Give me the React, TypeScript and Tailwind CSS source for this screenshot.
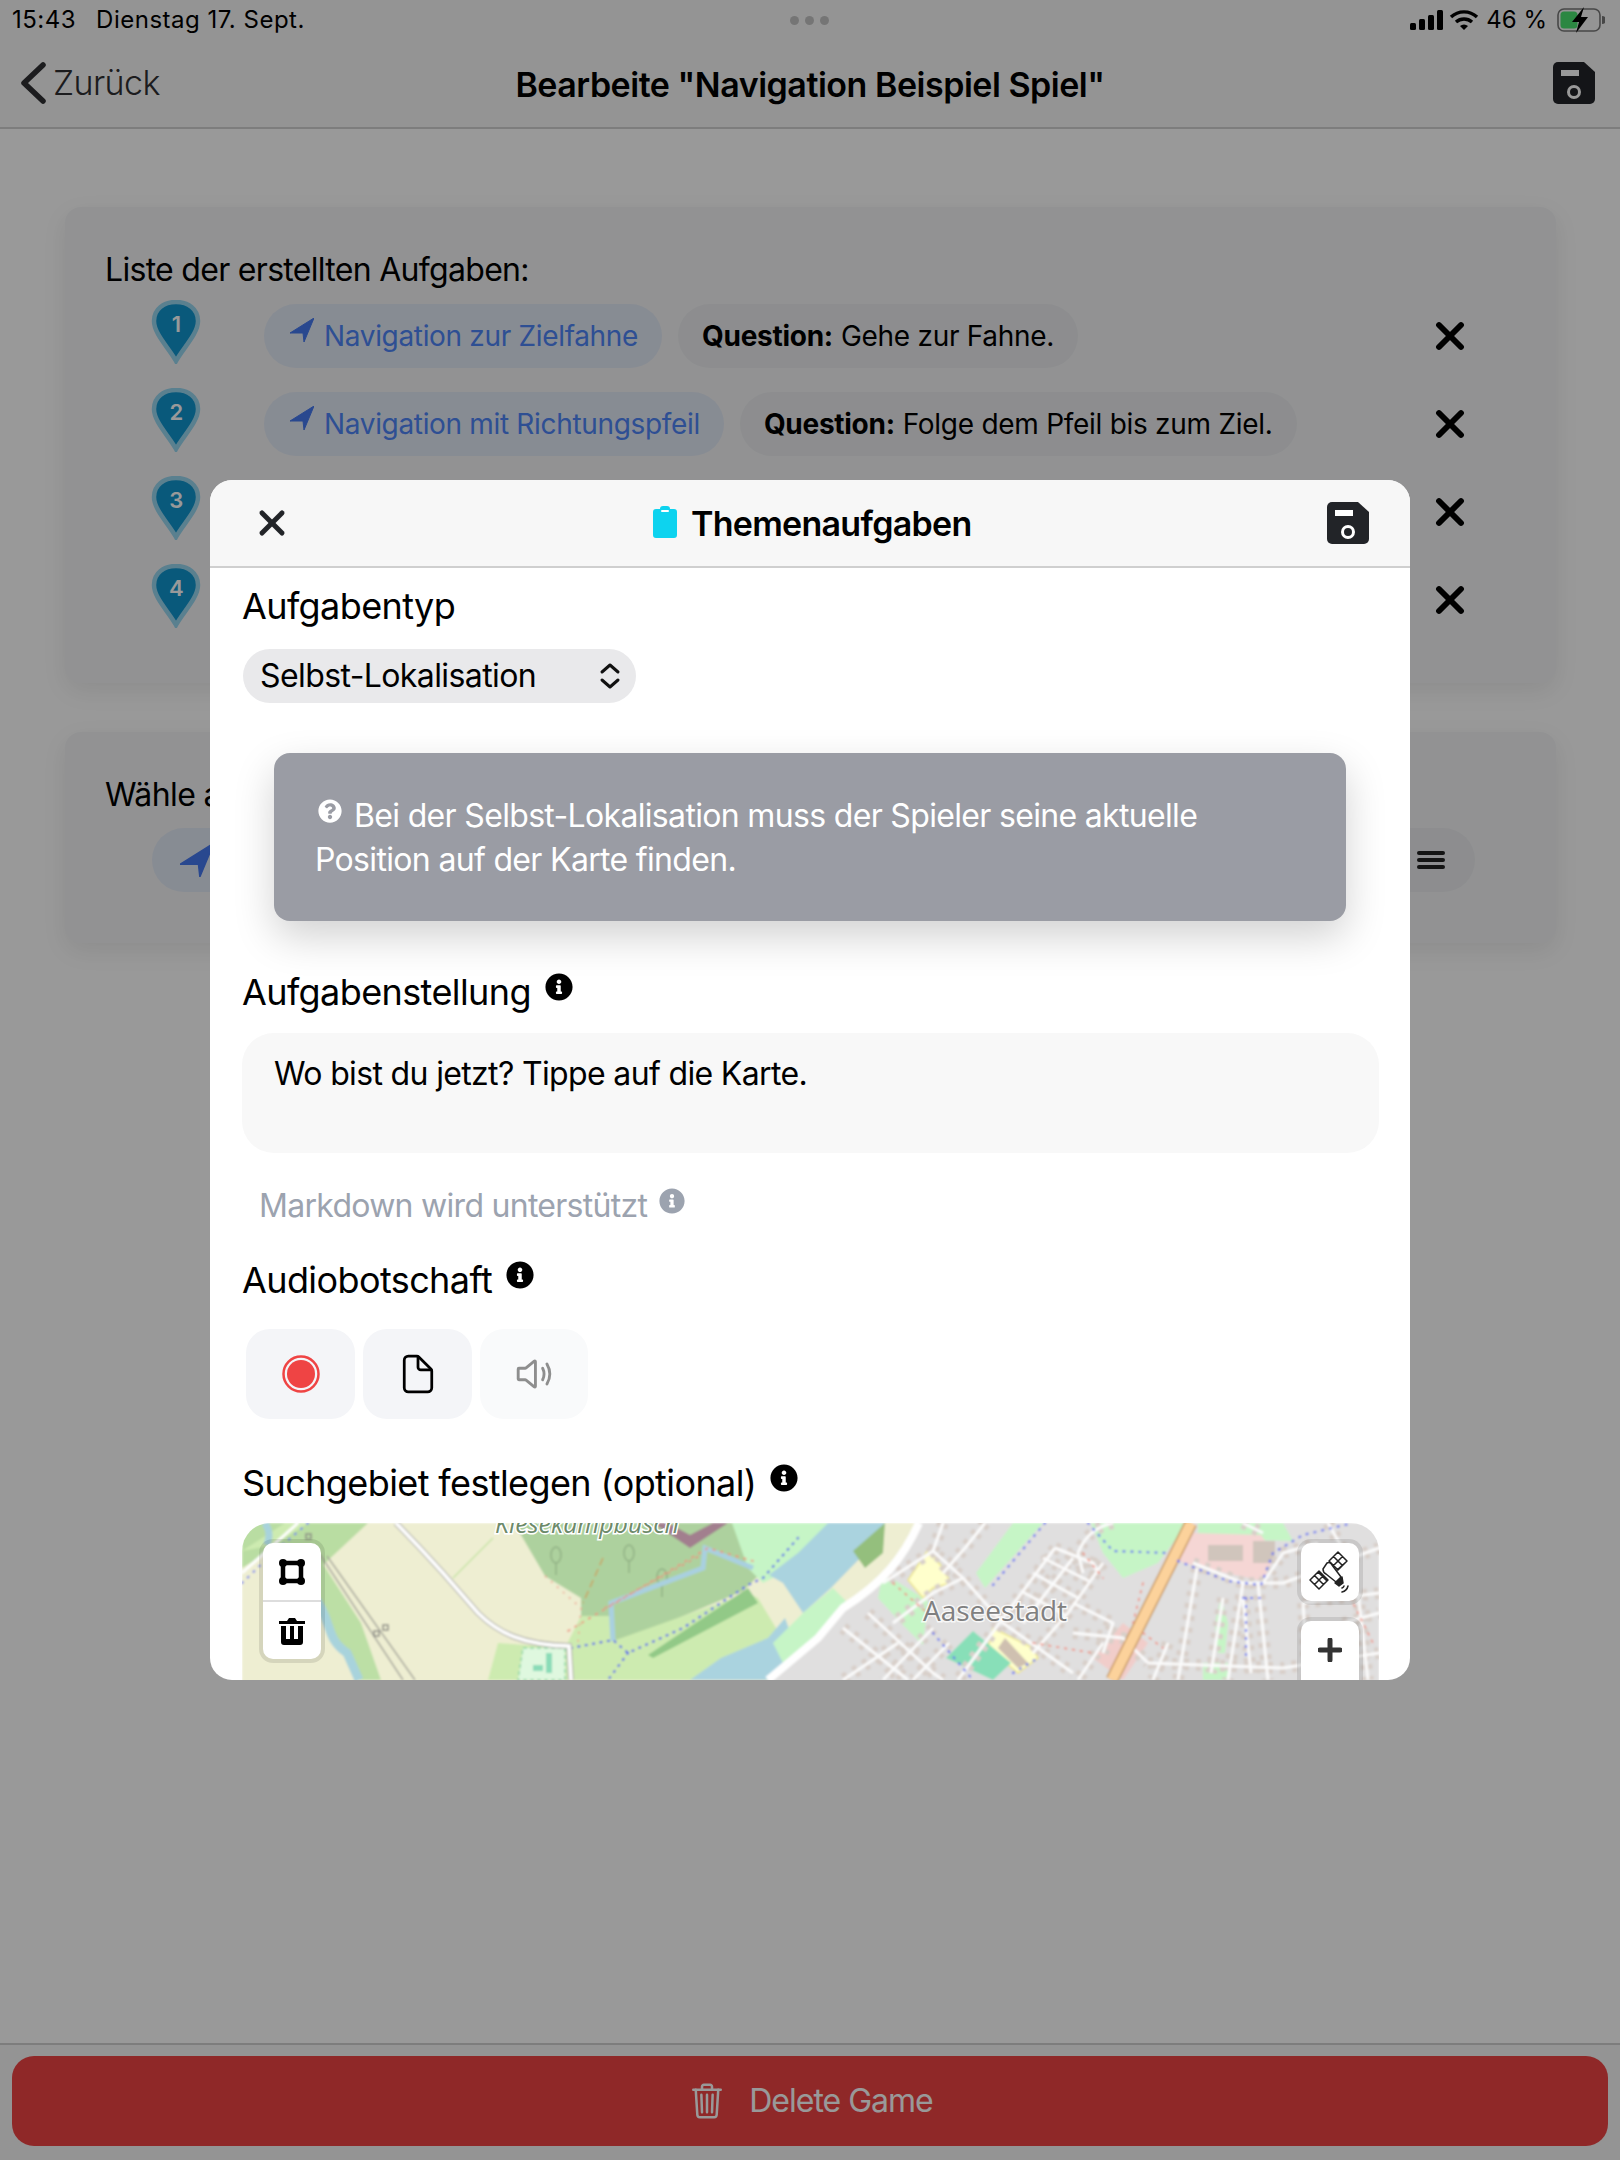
import React from 'react';
import { X } from 'lucide-react';
import { FaInfoCircle, FaQuestionCircle } from 'react-icons/fa';
import { IoDocumentOutline, IoTrashOutline, IoVolumeMediumOutline } from 'react-icons/io5';

const NavArrow = ({ size = 24 }: { size?: number }) => (
  <svg width={size} height={size} viewBox="0 0 24 24" className="shrink-0">
    <path d="M24 0 L0 15 L13 15 L14 24 Z" fill="#4578ee" stroke="#4578ee" strokeLinejoin="round" />
  </svg>
);

const Floppy = ({ fill }: { fill: string }) => (
  <svg width="42" height="42" viewBox="0 0 42 42" className="shrink-0">
    <path d="M5 0 H31 L42 10 V37 A5 5 0 0 1 37 42 H5 A5 5 0 0 1 0 37 V5 A5 5 0 0 1 5 0 Z" fill={fill} />
    <rect x="8" y="8" width="18" height="6" fill="#fff" />
    <circle cx="21" cy="30" r="5.5" fill="none" stroke="#fff" strokeWidth="3" />
  </svg>
);

const Pin = ({ n }: { n: number }) => (
  <svg width="50" height="64" viewBox="0 0 50 64" className="shrink-0">
    <path d="M25 61 C18 48 3 34 3 21 C3 9 13 2 25 2 C37 2 47 9 47 21 C47 34 32 48 25 61 Z" fill="#0f94ce" stroke="#97d5ee" strokeWidth="4.5" />
    <text x="25" y="32" textAnchor="middle" fontSize="22" fontWeight="600" fontFamily="Inter, sans-serif" fill="#fff">{n}</text>
  </svg>
);

const TaskRow = ({ n, children }: { n: number; children?: React.ReactNode }) => (
  <div className="flex h-[64px] items-center">
    <div className="ml-[86px] w-[113px] -translate-y-[4px]">
      <Pin n={n} />
    </div>
    <div className="flex flex-1 gap-[16px]">{children}</div>
    <X size={44} strokeWidth={3.2} className="mr-[84px] text-black" />
  </div>
);

const TypePill = ({ label }: { label: string }) => (
  <div className="flex h-[64px] items-center gap-[10px] rounded-[32px] bg-[#e2e9f5] pl-[26px] pr-[24px] text-[28px] tracking-[-0.33px] text-[#4d84f5]">
    <span className="-translate-y-[6px]"><NavArrow /></span>
    <span>{label}</span>
  </div>
);

const QuestionPill = ({ text }: { text: string }) => (
  <div className="flex h-[64px] items-center rounded-[32px] bg-[#ebecee] px-[24px] text-[28px] tracking-[-0.28px] text-black">
    <b className="mr-[8px] font-bold">Question:</b>
    <span>{text}</span>
  </div>
);

const SectionTitle = ({ title, className }: { title: string; className: string }) => (
  <div className={`flex h-[44px] items-center ${className}`}>
    <span className="text-[36px] text-black">{title}</span>
    <FaInfoCircle size={28} className="ml-[14px] -translate-y-[5px] text-black" />
  </div>
);

const MAP_STREETS = [
  'M700 0 L690 28 L720 55 L760 100 L830 150', 'M690 28 L640 60', 'M742 0 L722 25 L700 50', 'M720 55 L690 70 L650 100',
  'M812 25 L760 95 L715 157', 'M812 25 L850 40 L855 50', 'M830 35 L780 100', 'M800 35 L846 58', 'M790 50 L835 75', 'M778 68 L822 92',
  'M860 40 L825 90 L790 130', 'M830 80 L870 100 L860 130', 'M870 0 Q845 5 835 30 L840 50', 'M600 105 L665 157', 'M625 90 L690 150 L700 157',
  'M655 120 L600 157', 'M690 105 L640 157', 'M706 120 L670 157', 'M860 120 L835 157', 'M830 110 L880 115 L905 140', 'M925 120 L910 157',
  'M954 45 L935 157', 'M1000 60 L985 157', 'M980 75 L968 150 M1000 75 L1008 150', 'M1015 60 L1025 157', 'M950 40 L1000 60 L1040 60 L1136 25',
  'M905 140 L1040 145 L1136 130', 'M1020 60 L1040 30 L1075 20', 'M1060 80 L1136 70 M1060 80 L1065 157', 'M1085 0 L1102 30 M1000 0 L1020 10',
  'M1100 100 L1136 90', 'M1115 70 L1125 157',
];

const MAP_TREES = [[313, 52], [419, 74], [386, 50], [366, 5]];

const MapDrawing = () => (
  <svg width="1137" height="300" viewBox="-1 0 1137 300" className="block tracking-normal">
    <defs>
      <filter id="soft"><feGaussianBlur stdDeviation="0.8" /></filter>
    </defs>
    <g filter="url(#soft)" fill="none">
      <rect x="-1" width="1137" height="300" fill="#eeeed2" />
      <path d="M-1 0 H125 L80 42 L40 20 L-1 45 Z" fill="#b9dda2" />
      <path d="M-1 28 L42 0 L66 0 L30 22 Z" fill="#cdebb0" />
      <path d="M78 38 L118 100 L138 157 L112 157 L92 110 L66 60 Z" fill="#bcdfa5" />
      <path d="M72 75 C90 100 82 115 104 130 L116 157" stroke="#a8d3dc" strokeWidth="9" />
      <path d="M22 0 C28 10 26 15 24 22" stroke="#a8d3dc" strokeWidth="7" />
      <path d="M-1 60 L30 30 L65 0" stroke="#6a78f0" strokeWidth="2" strokeDasharray="1 7" strokeLinecap="round" />
      <path d="M-1 50 L55 0" stroke="#fff" strokeWidth="3" />
      <path d="M84 33 L172 157 M76 30 L160 157" stroke="#a6a69b" strokeWidth="1.4" />
      <rect x="63" y="11" width="5" height="5" stroke="#8a8a84" strokeWidth="1.5" />
      <rect x="131" y="108" width="5" height="5" stroke="#8a8a84" strokeWidth="1.5" />
      <rect x="140" y="102" width="5" height="5" stroke="#8a8a84" strokeWidth="1.5" />
      <path d="M210 55 L250 15" stroke="#c5e3a5" strokeWidth="1.5" />

      <path d="M271 0 H489 L515 8 L516 52 L500 68 L395 112 L370 118 L368 93 L338 93 L338 75 L302 53 Z" fill="#add19e" />
      <path d="M338 93 L368 93 L370 118 L505 70 L515 75 L545 125 L505 157 L310 157 L322 125 Z" fill="#cdebb0" />
      <path d="M255 120 L326 125 L312 157 L245 157 Z" fill="#cdebb0" />
      <path d="M280 125 H322 V157 H275 Z" fill="#dff8df" stroke="#8fd6a6" strokeWidth="1.5" strokeDasharray="4 3" />
      <path d="M290 145 H300 M306 130 V150" stroke="#8adcb8" strokeWidth="6" />
      <path d="M489 0 H600 L560 40 L520 60 L505 45 Z" fill="#c6f5c6" />
      <path d="M585 0 H642 L622 30 L588 65 L560 90 L540 60 L526 52 L555 30 Z" fill="#aad3df" />
      <path d="M447 157 L478 135 L525 115 L542 95 L555 130 L528 157 Z" fill="#aad3df" />
      <path d="M560 90 L590 65 L605 80 L545 150 L530 120 Z" fill="#c6f5c6" />
      <path d="M610 28 L622 45 L640 30 L642 0 Z" fill="#94bf7d" />

      {MAP_TREES.map(([x, y]) => (
        <path key={x} d={`M${x} ${y} v-12 m-5 -8 a5 8 0 1 1 10 0 a5 8 0 1 1 -10 0`} stroke="#8fae82" strokeWidth="1.4" />
      ))}
      <path d="M370 118 L368 80 L460 45 L462 25 L510 45" stroke="#a9d0e0" strokeWidth="5" />
      <path d="M362 85 L458 32" stroke="#e98f7d" strokeWidth="1.5" strokeDasharray="2 6" strokeLinecap="round" />
      <path d="M325 108 L465 25 L510 38" stroke="#f08a7a" strokeWidth="1.6" strokeDasharray="2 6" strokeLinecap="round" />
      <path d="M302 53 L338 85 L335 120" stroke="#f0a08e" strokeWidth="1.5" strokeDasharray="2 6" />
      <path d="M360 35 L340 80" stroke="#c9a25f" strokeWidth="1.5" strokeDasharray="8 4" />
      <path d="M405 132 L505 65 L515 80 L410 135 Z" fill="#92c987" />
      <path d="M328 125 L370 117 L385 130 L440 105 L505 62 L520 55 L555 15" stroke="#5565e8" strokeWidth="2.2" strokeDasharray="1 6.5" strokeLinecap="round" />
      <path d="M385 130 L365 157" stroke="#5565e8" strokeWidth="2.2" strokeDasharray="1 6.5" strokeLinecap="round" />
      <path d="M410 0 L447 25 L485 0 L470 0 L447 12 L425 0 Z" fill="#a27f8e" />
      <path d="M153 0 L177 25 L200 50 L235 90 C255 110 280 122 326 123 L328 157" stroke="#b8b8b0" strokeWidth="6" />
      <path d="M153 0 L177 25 L200 50 L235 90 C255 110 280 122 326 123 L328 157" stroke="#fff" strokeWidth="3.5" />

      <path d="M676 0 C660 35 640 60 600 85 L575 115 L525 157 L1136 300 V0 Z" fill="#e0dfdf" />
      <path d="M525 157 H1136 V300 H525 Z" fill="#e0dfdf" />
      <path d="M770 0 H800 L742 65 L733 50 Z" fill="#c6f5c6" />
      <path d="M640 50 L685 78 L680 122 L660 102 L635 75 Z" fill="#c6f5c6" />
      <path d="M848 0 H945 L915 40 L880 55 L860 30 Z" fill="#c6f5c6" />
      <path d="M955 0 H1040 L1050 18 L955 15 Z" fill="#c6f5c6" />
      <path d="M950 10 L1018 12 L1032 32 L1020 58 L960 45 L935 38 Z" fill="#f5d6d4" />
      <path d="M965 22 H1000 V38 H965 Z M1010 18 H1032 V40 H1010 Z" fill="#d0c5bc" />
      <path d="M685 27 L700 45 L708 60 L690 65 L680 75 L665 57 Z" fill="#ffffcc" stroke="#ece58a" strokeWidth="1.5" />
      <path d="M750 105 L790 125 L795 135 L775 150 L745 125 Z" fill="#ffffcc" stroke="#ece58a" strokeWidth="1.5" />
      <path d="M762 115 L785 140 L775 145 L755 125 Z" fill="#cfc0b0" />
      <path d="M730 108 L768 140 L750 157 L703 135 Z" fill="#88dfb8" />
      <path d="M880 100 L905 120 L880 157 L850 135 Z" fill="#f1cdca" />
      <path d="M975 130 L972 100 L978 75 L985 100 L982 130 Z" fill="#c6f5c6" />
      <path d="M960 140 H985 V157 H960 Z" fill="#c6f5c6" />
      {MAP_STREETS.map((d) => (
        <path key={`b${d}`} d={d} stroke="#d8cfc9" strokeWidth="12" strokeDasharray="5 7" />
      ))}
      {MAP_STREETS.map((d) => (
        <path key={d} d={d} stroke="#fbfbfb" strokeWidth="3" strokeLinejoin="round" />
      ))}
      <path d="M676 0 C660 35 640 60 600 85 L575 115 L525 157" stroke="#fff" strokeWidth="8" />
      <path d="M948 0 L869 157" stroke="#c89a62" strokeWidth="13" />
      <path d="M948 0 L869 157" stroke="#fcd29b" strokeWidth="10" />
      <path d="M802 0 L750 62" stroke="#5f6ff0" strokeWidth="2.2" strokeDasharray="1 7" strokeLinecap="round" />
      <path d="M845 0 L870 28 L925 30 M935 38 L985 58 L1018 62 L1030 30 L1060 12 L1110 0" stroke="#5f6ff0" strokeWidth="2.2" strokeDasharray="1 7" strokeLinecap="round" />
      <path d="M1000 75 H1020 M1003 75 V135 M690 110 L730 157 M770 150 L795 135" stroke="#5f6ff0" strokeWidth="2.2" strokeDasharray="1 7" strokeLinecap="round" />
      <path d="M650 60 L690 95 M840 30 L860 55 M1060 65 L1070 30 M900 110 L920 125 M1100 60 L1130 120 M790 120 L850 130 M900 60 L890 100" stroke="#f08a7a" strokeWidth="1.6" strokeDasharray="2 6" strokeLinecap="round" />
    </g>
    <text x="252" y="10" fontSize="25" fontStyle="italic" fontFamily="Open Sans, sans-serif" fill="#6d8a6a" stroke="#fff" strokeWidth="3" paintOrder="stroke">Kiesekampbusch</text>
    <text x="680" y="98" fontSize="28" fontFamily="Open Sans, sans-serif" fill="#808080" stroke="#fff" strokeOpacity="0.75" strokeWidth="3" paintOrder="stroke">Aaseestadt</text>
  </svg>
);

const MapControl = ({ children, className }: { children: React.ReactNode; className: string }) => (
  <div className={`absolute w-[58px] rounded-[10px] bg-white shadow-[0_0_0_4px_rgba(0,0,0,0.1)] ${className}`}>{children}</div>
);

const MapView = () => (
  <div className="relative mt-[18px] h-[300px] w-[1137px] overflow-hidden rounded-[28px]">
    <MapDrawing />
    <MapControl className="left-[21px] top-[20px] h-[116px]">
      <div className="flex h-[59px] items-center justify-center border-b-2 border-[#ddd]">
        <svg width="26" height="28" viewBox="0 0 26 28">
          <path d="M4 5 H22 V23 H4 Z" fill="none" stroke="#000" strokeWidth="4.5" />
          <circle cx="4" cy="5" r="4" /><circle cx="22" cy="5" r="4" /><circle cx="4" cy="23" r="4" /><circle cx="22" cy="23" r="4" />
        </svg>
      </div>
      <div className="flex h-[57px] items-center justify-center">
        <svg width="26" height="30" viewBox="0 0 26 30">
          <path d="M0 5 H8 L10 2 H16 L18 5 H26 V8 H0 Z" />
          <path d="M2 10 H7 V23 H11 V10 H15 V23 H19 V10 H24 V26 A3 3 0 0 1 21 29 H5 A3 3 0 0 1 2 26 Z" />
        </svg>
      </div>
    </MapControl>
    <MapControl className="left-[1059px] top-[20px] h-[58px] flex items-center justify-center">
      <svg width="42" height="44" viewBox="0 0 42 44" fill="none" stroke="#222" strokeWidth="1.5" strokeLinecap="round" strokeLinejoin="round">
        <path d="M1 30 L10 21 L19 30 L10 39 Z M5.5 25.5 L14.5 34.5 M9 22 L18 31 M5.5 34.5 L14.5 25.5" />
        <path d="M20 11 L29 2 L38 11 L29 20 Z M24.5 6.5 L33.5 15.5 M24.5 15.5 L33.5 6.5 M28 20 L37 12" />
        <path d="M14 19 L18 13 C20 12 22 13 23 15 L32 27 L27 32 L17 24 C15 23 14 21 14 19 Z" />
        <path d="M26 33 L33 27 L34 33 L30 36 Z" fill="#222" />
        <path d="M35 36 A3 3 0 0 1 33 38 M39 36 A8 8 0 0 1 33 42" />
      </svg>
    </MapControl>
    <MapControl className="left-[1059px] top-[98px] h-[116px]">
      <div className="flex h-[58px] items-center justify-center">
        <svg width="24" height="24" viewBox="0 0 24 24"><path d="M12 2 V22 M2 12 H22" stroke="#333" strokeWidth="5" strokeLinecap="round" /></svg>
      </div>
    </MapControl>
  </div>
);

const Modal = () => (
  <div className="absolute left-[210px] top-[480px] h-[1200px] w-[1200px] overflow-hidden rounded-[22px] bg-white">
    <div className="relative flex h-[88px] items-center justify-between border-b-2 border-[#cfcfcf] bg-[#f7f7f7] pl-[42px] pr-[41px]">
      <X size={40} strokeWidth={3} className="text-[#222428]" />
      <div className="absolute left-[443px] top-[23px] flex items-center">
        <svg width="24" height="32" viewBox="0 0 24 32" className="-translate-y-[2px]">
          <path d="M3 3 H7 A3 3 0 0 1 10 0 H14 A3 3 0 0 1 17 3 H21 A3 3 0 0 1 24 6 V29 A3 3 0 0 1 21 32 H3 A3 3 0 0 1 0 29 V6 A3 3 0 0 1 3 3 Z" fill="#0dd3ef" />
          <rect x="8" y="4" width="8" height="2" rx="1" fill="#fff" />
        </svg>
        <span className="ml-[14px] text-[34px] leading-[42px] tracking-[-0.72px] font-semibold text-black">Themenaufgaben</span>
      </div>
      <Floppy fill="#222428" />
    </div>

    <div className="pl-[32px] pr-[31px]">
      <div className="mt-[16px] h-[44px] text-[36px] leading-[44px] text-black">Aufgabentyp</div>
      <div className="ml-[1px] mt-[21px] flex h-[54px] w-[393px] items-center justify-between rounded-[27px] bg-[#e9e9eb] pl-[17px] pr-[15px] text-[32px] text-black">
        <span>Selbst-Lokalisation</span>
        <svg width="22" height="26" viewBox="0 0 22 26" fill="none" stroke="#111" strokeWidth="3" strokeLinecap="round" strokeLinejoin="round">
          <path d="M3 9 L11 2 L19 9 M3 17 L11 24 L19 17" />
        </svg>
      </div>

      <div className="ml-[32px] mt-[50px] flex h-[168px] w-[1072px] flex-col justify-center rounded-[16px] bg-[#9a9ca4] pl-[41px] pr-[40px] pt-[2px] text-[32px] leading-[44px] tracking-[-0.67px] text-white shadow-[0_16px_40px_rgba(0,0,0,0.18)]">
        <div>
          <FaQuestionCircle size={24} className="mb-[14px] mr-[12px] ml-[3px] inline-block text-white" />
          Bei der Selbst-Lokalisation muss der Spieler seine aktuelle
          <br />
          Position auf der Karte finden.
        </div>
      </div>

      <SectionTitle title="Aufgabenstellung" className="mt-[49px]" />
      <div className="mt-[19px] h-[120px] w-[1137px] rounded-[32px] bg-[#f8f8f8] px-[32px] pt-[21px] text-[32px] leading-[40px] tracking-[-0.65px] text-black">
        Wo bist du jetzt? Tippe auf die Karte.
      </div>

      <div className="ml-[17px] mt-[33px] flex h-[40px] items-center text-[32px] tracking-[-0.72px] text-[#9ca3af]">
        <span>Markdown wird unterstützt</span>
        <FaInfoCircle size={26} className="ml-[12px] -translate-y-[5px]" />
      </div>

      <SectionTitle title="Audiobotschaft" className="mt-[32px]" />
      <div className="ml-[4px] mt-[27px] flex gap-[8px]">
        <div className="flex h-[90px] w-[109px] items-center justify-center rounded-[24px] bg-[#f4f5f8]">
          <svg width="38" height="38" viewBox="0 0 38 38">
            <circle cx="19" cy="19" r="17.5" fill="none" stroke="#ef4444" strokeWidth="2.5" />
            <circle cx="19" cy="19" r="14" fill="#ef4444" />
          </svg>
        </div>
        <div className="flex h-[90px] w-[109px] items-center justify-center rounded-[24px] bg-[#f4f5f8]">
          <IoDocumentOutline size={44} className="text-black" />
        </div>
        <div className="flex h-[90px] w-[108px] items-center justify-center rounded-[24px] bg-[#f9fafb]">
          <IoVolumeMediumOutline size={46} className="text-[#8e8e8e]" />
        </div>
      </div>

      <SectionTitle title="Suchgebiet festlegen (optional)" className="mt-[42px]" />
      <MapView />
    </div>
  </div>
);

const App = () => {
  return (
    <div className="relative flex h-[2160px] w-[1620px] flex-col overflow-hidden bg-white font-[Inter,sans-serif] tracking-[-0.6px]">
      <div className="h-[129px] border-b-2 border-[#d0d0d0] bg-[#f7f7f7]">
        <div className="relative flex h-[40px] items-center justify-between pl-[12px] pr-[15px] text-[24px] tracking-[0.5px] text-black">
          <div className="flex gap-[20px]">
            <span>15:43</span>
            <span>Dienstag 17. Sept.</span>
          </div>
          <div className="absolute left-[790px] top-[16px] flex gap-[6px]">
            <span className="h-[9px] w-[9px] rounded-full bg-[#c4c4c4]" />
            <span className="h-[9px] w-[9px] rounded-full bg-[#c4c4c4]" />
            <span className="h-[9px] w-[9px] rounded-full bg-[#c4c4c4]" />
          </div>
          <div className="flex items-center">
            <svg width="34" height="20" viewBox="0 0 34 20" fill="#000">
              <rect x="0" y="13" width="6" height="7" rx="1.5" /><rect x="9" y="9" width="6" height="11" rx="1.5" /><rect x="18" y="5" width="6" height="15" rx="1.5" /><rect x="27" y="0" width="6" height="20" rx="1.5" />
            </svg>
            <svg width="30" height="22" viewBox="0 0 30 22" fill="none" stroke="#000" strokeWidth="3.4" className="ml-[5px]">
              <path d="M2 8 A19 19 0 0 1 28 8 M7 13 A12 12 0 0 1 23 13" />
              <path d="M11 17 A6 6 0 0 1 19 17 L15 21 Z" fill="#000" stroke="none" />
            </svg>
            <span className="ml-[7px] tracking-normal">46 %</span>
            <svg width="48" height="26" viewBox="0 0 48 26" className="ml-[10px]">
              <rect x="1" y="2" width="42" height="22" rx="6" fill="none" stroke="#777" strokeWidth="1.6" />
              <rect x="3.5" y="4.5" width="17" height="17" rx="3.5" fill="#4ae26f" />
              <path d="M45 9 A4 4 0 0 1 45 17 Z" fill="#777" />
              <path d="M27 0 L15 15 H22 L19 26 L31 10 H24 Z" fill="#000" />
            </svg>
          </div>
        </div>
        <div className="relative flex h-[85px] items-center justify-between pl-[20px] pr-[25px]">
          <div className="flex items-center">
            <svg width="26" height="42" viewBox="0 0 26 42" fill="none" stroke="#2f3033" strokeWidth="5.5" strokeLinecap="round" strokeLinejoin="round">
              <path d="M23 3 L4 21 L23 39" />
            </svg>
            <span className="ml-[7px] text-[34px] font-light text-[#2f3033]">Zurück</span>
          </div>
          <div className="absolute left-0 top-[19px] w-full text-center text-[34px] tracking-[-0.48px] font-semibold text-black">Bearbeite "Navigation Beispiel Spiel"</div>
          <Floppy fill="#222428" />
        </div>
      </div>

      <div className="flex-1 px-[65px] pt-[78px]">
        <div className="h-[476px] w-[1491px] rounded-[16px] bg-[#f3f4f6] shadow-[0_8px_24px_rgba(0,0,0,0.08)]">
          <div className="pl-[40px] pt-[42px] text-[32px] leading-[42px] tracking-[-0.7px] text-black">Liste der erstellten Aufgaben:</div>
          <div className="mt-[13px] flex flex-col gap-[24px]">
            <TaskRow n={1}>
              <TypePill label="Navigation zur Zielfahne" />
              <QuestionPill text="Gehe zur Fahne." />
            </TaskRow>
            <TaskRow n={2}>
              <TypePill label="Navigation mit Richtungspfeil" />
              <QuestionPill text="Folge dem Pfeil bis zum Ziel." />
            </TaskRow>
            <TaskRow n={3} />
            <TaskRow n={4} />
          </div>
        </div>

        <div className="mt-[49px] h-[211px] w-[1491px] rounded-[16px] bg-[#f3f4f6] shadow-[0_8px_24px_rgba(0,0,0,0.08)]">
          <div className="pl-[40px] pt-[42px] text-[32px] leading-[42px] text-black">Wähle aus:</div>
          <div className="ml-[87px] mr-[81px] mt-[12px] flex justify-between">
            <div className="flex h-[64px] w-[300px] items-center rounded-[32px] bg-[#e2e9f5] pl-[28px]">
              <NavArrow size={34} />
            </div>
            <div className="flex h-[64px] w-[200px] items-center justify-end rounded-[32px] bg-[#ebecee] pr-[30px]">
              <svg width="28" height="24" viewBox="0 0 28 24" fill="#222">
                <rect y="3" width="28" height="4" rx="2" /><rect y="10" width="28" height="4" rx="2" /><rect y="17" width="28" height="4" rx="2" />
              </svg>
            </div>
          </div>
        </div>
      </div>

      <div className="h-[117px] border-t-2 border-[#d0d0d0] bg-[#f7f7f7] px-[12px] pt-[11px]">
        <div className="flex h-[90px] items-center justify-center rounded-[22px] bg-[#ef4444] text-[32px] tracking-[-1px] text-white">
          <IoTrashOutline size={40} className="mr-[22px]" />
          <span>Delete Game</span>
        </div>
      </div>

      <div className="absolute inset-0 bg-black/40" />
      <Modal />
    </div>
  );
};

export default App;
